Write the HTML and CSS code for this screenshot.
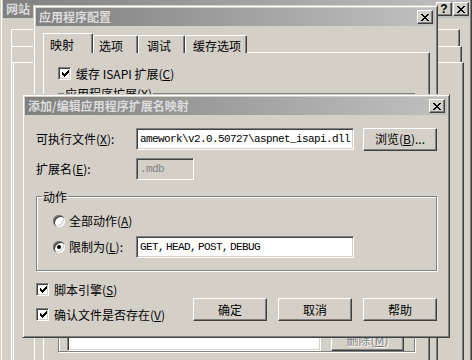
FILE: index.html
```html
<!DOCTYPE html>
<html lang="zh-CN">
<head>
  <meta charset="UTF-8">
  <title>添加/编辑应用程序扩展名映射</title>
  <link rel="stylesheet" href="styles.css">
</head>
<body>
  <div class="desktop">

    <!-- 网站 属性 (back window) -->
    <div class="window win-site">
      <div class="titlebar">
        <span class="title">网站</span>
        <span class="caption-btns">
          <span class="cap-btn cap-help">?</span>
          <span class="cap-btn">
            <svg width="8" height="7" viewBox="0 0 8 7"><path d="M0 0h2v1H0zM6 0h2v1H6zM1 1h2v1H1zM5 1h2v1H5zM2 2h4v1H2zM3 3h2v1H3zM2 4h4v1H2zM1 5h2v1H1zM5 5h2v1H5zM0 6h2v1H0zM6 6h2v1H6z"/></svg>
          </span>
        </span>
      </div>
      <div class="site-tabrow site-tabrow-1"></div>
      <div class="site-tabrow site-tabrow-2"></div>
      <div class="site-panel"></div>
    </div>

    <!-- 应用程序配置 (middle window) -->
    <div class="window win-config">
      <div class="titlebar">
        <span class="title">应用程序配置</span>
        <span class="caption-btns">
          <span class="cap-btn">
            <svg width="8" height="7" viewBox="0 0 8 7"><path d="M0 0h2v1H0zM6 0h2v1H6zM1 1h2v1H1zM5 1h2v1H5zM2 2h4v1H2zM3 3h2v1H3zM2 4h4v1H2zM1 5h2v1H1zM5 5h2v1H5zM0 6h2v1H0zM6 6h2v1H6z"/></svg>
          </span>
        </span>
      </div>
      <div class="tabs">
        <div class="tab active tab-map">映射</div>
        <div class="tab tab-opt">选项</div>
        <div class="tab tab-debug">调试</div>
        <div class="tab tab-cache">缓存选项</div>
      </div>
      <div class="tab-panel">
        <div class="check-row">
          <span class="checkbox checked">
            <svg width="9" height="9" viewBox="0 0 9 9"><path d="M1 2h1v3H1zM2 3h1v3H2zM3 4h1v3H3zM4 3h1v3H4zM5 2h1v3H5zM6 1h1v3H6zM7 0h1v3H7z"/></svg>
          </span>
          <span>缓存 ISAPI 扩展(<u>C</u>)</span>
        </div>
        <div class="group ext-group">
          <span class="legend">应用程序扩展(<u>X</u>)</span>
          <div class="ext-bottom">
            <div class="listbox"></div>
            <span class="btn btn-disabled">删除(<u>M</u>)</span>
          </div>
        </div>
      </div>
    </div>

    <!-- 添加/编辑应用程序扩展名映射 (front dialog) -->
    <div class="window dlg-map">
      <div class="titlebar">
        <span class="title">添加/编辑应用程序扩展名映射</span>
        <span class="caption-btns">
          <span class="cap-btn">
            <svg width="8" height="7" viewBox="0 0 8 7"><path d="M0 0h2v1H0zM6 0h2v1H6zM1 1h2v1H1zM5 1h2v1H5zM2 2h4v1H2zM3 3h2v1H3zM2 4h4v1H2zM1 5h2v1H1zM5 5h2v1H5zM0 6h2v1H0zM6 6h2v1H6z"/></svg>
          </span>
        </span>
      </div>

      <div class="dlg-body">
        <div class="field field-exe">
          <span class="field-label">可执行文件(<u>X</u>):</span>
          <span class="textbox textbox-exe">amework\v2.0.50727\aspnet_isapi.dll</span>
          <span class="btn btn-browse">浏览(<u>B</u>)...</span>
        </div>

        <div class="field field-ext">
          <span class="field-label">扩展名(<u>E</u>):</span>
          <span class="textbox textbox-ext disabled">.mdb</span>
        </div>

        <div class="group verbs-group">
          <span class="legend">动作</span>
          <div class="radio-row">
            <span class="radio"></span>
            <span class="radio-label">全部动作(<u>A</u>)</span>
          </div>
          <div class="radio-row">
            <span class="radio checked"></span>
            <span class="radio-label">限制为(<u>L</u>):</span>
            <span class="textbox textbox-verbs">GET, HEAD, POST, DEBUG</span>
          </div>
        </div>

        <div class="dlg-bottom">
          <div class="checks">
            <div class="check-row">
              <span class="checkbox checked">
                <svg width="9" height="9" viewBox="0 0 9 9"><path d="M1 2h1v3H1zM2 3h1v3H2zM3 4h1v3H3zM4 3h1v3H4zM5 2h1v3H5zM6 1h1v3H6zM7 0h1v3H7z"/></svg>
              </span>
              <span>脚本引擎(<u>S</u>)</span>
            </div>
            <div class="check-row">
              <span class="checkbox checked">
                <svg width="9" height="9" viewBox="0 0 9 9"><path d="M1 2h1v3H1zM2 3h1v3H2zM3 4h1v3H3zM4 3h1v3H4zM5 2h1v3H5zM6 1h1v3H6zM7 0h1v3H7z"/></svg>
              </span>
              <span>确认文件是否存在(<u>V</u>)</span>
            </div>
          </div>
          <div class="dlg-buttons">
            <span class="btn">确定</span>
            <span class="btn">取消</span>
            <span class="btn">帮助</span>
          </div>
        </div>
      </div>
    </div>

  </div>
</body>
</html>
```

FILE: styles.css
```css
:root {
  --face: #d4d0c8;
  --light: #ffffff;
  --shadow: #808080;
  --dark: #404040;
  --caption-left: #808080;
  --caption-right: #c0c0c0;
  --caption-text: #dcdcdc;
}

* {
  margin: 0;
  padding: 0;
  box-sizing: border-box;
}

body {
  width: 472px;
  height: 360px;
  overflow: hidden;
  background: var(--face);
  color: #000;
  font-family: "Noto Sans CJK SC", sans-serif;
  font-size: 12px;
  line-height: 1;
}

u {
  text-decoration: underline;
  text-underline-offset: 1px;
}

.desktop {
  position: relative;
  width: 472px;
  height: 360px;
  overflow: hidden;
}

/* ---------- window frame ---------- */

.window {
  position: absolute;
  display: flex;
  flex-direction: column;
  background: var(--face);
  border: 1px solid;
  border-color: var(--face) var(--dark) var(--dark) var(--face);
  box-shadow: inset 1px 1px var(--light), inset -1px -1px var(--shadow);
  padding: 2px;
}

.titlebar {
  flex: none;
  height: 18px;
  display: flex;
  align-items: center;
  justify-content: space-between;
  padding-left: 3px;
  background: linear-gradient(to right, var(--caption-left), var(--caption-right));
}

.title {
  color: var(--caption-text);
  font-weight: bold;
  font-size: 12px;
  line-height: 18px;
  white-space: nowrap;
}

.caption-btns {
  display: flex;
  align-items: center;
  gap: 0;
  margin-right: 2px;
}

.cap-btn {
  width: 16px;
  height: 14px;
  display: flex;
  align-items: center;
  justify-content: center;
  background: var(--face);
  border: 1px solid;
  border-color: var(--light) var(--dark) var(--dark) var(--light);
  box-shadow: inset -1px -1px var(--shadow);
}

.cap-btn svg {
  fill: #000;
  shape-rendering: crispEdges;
  margin-top: 1px;
}

.cap-help {
  margin-right: 1px;
  font-family: "Liberation Sans", sans-serif;
  font-weight: bold;
  font-size: 12px;
  line-height: 12px;
}

/* ---------- back window: 网站 ---------- */

.win-site {
  left: 0;
  top: -3px;
  width: 472px;
  height: 400px;
}

.win-site .caption-btns {
  margin-right: 0;
}

.site-tabrow {
  flex: none;
  margin-left: 8px;
  border-top: 1px solid var(--light);
  border-left: 1px solid var(--light);
  border-right: 1px solid var(--dark);
  box-shadow: inset -1px 0 var(--shadow);
}

.site-tabrow-1 {
  margin-top: 11px;
  height: 17px;
  margin-right: 9px;
}

.site-tabrow-2 {
  height: 16px;
  margin-right: 7px;
}

.site-panel {
  flex: 1;
  margin: 0 5px 0 8px;
  border-top: 1px solid var(--light);
  border-left: 1px solid var(--light);
  border-right: 1px solid var(--dark);
  box-shadow: inset -1px 0 var(--shadow), inset 1px 0 var(--face), inset 2px 0 var(--light);
}

/* ---------- middle window: 应用程序配置 ---------- */

.win-config {
  left: 33px;
  top: 5px;
  width: 405px;
  height: 400px;
}

.tabs {
  flex: none;
  display: flex;
  align-items: flex-end;
  height: 20px;
  margin-top: 7px;
  padding-left: 7px;
  position: relative;
  z-index: 1;
  margin-bottom: -1px;
}

.tab {
  height: 18px;
  padding: 4px 0 0 5px;
  border-top: 1px solid var(--light);
  border-left: 1px solid var(--light);
  border-right: 1px solid var(--dark);
  border-radius: 2px 2px 0 0;
  box-shadow: inset -1px 0 var(--shadow);
  background: var(--face);
  white-space: nowrap;
}

.tab.active {
  height: 20px;
  padding: 5px 0 0 6px;
}

.tab-map { width: 50px; }
.tab-opt { width: 45px; }
.tab-debug { width: 47px; padding-left: 8px; }
.tab-cache { width: 62px; padding-left: 7px; }

.tab-panel {
  flex: 1;
  margin: 0 5px 0 7px;
  padding: 14px 0 0 14px;
  border-top: 1px solid var(--light);
  border-left: 1px solid var(--light);
  border-right: 1px solid var(--dark);
  box-shadow: inset -1px 0 var(--shadow);
}

.ext-group {
  margin-top: 13px;
  width: 357px;
  padding: 57px 0 0 8px;
}

.ext-bottom {
  display: flex;
  align-items: flex-end;
  gap: 10px;
}

.listbox {
  width: 254px;
  height: 200px;
  background: #fff;
  border: 1px solid;
  border-color: var(--shadow) var(--light) var(--light) var(--shadow);
  box-shadow: inset 1px 1px var(--dark), inset -1px -1px var(--face);
}

/* ---------- common controls ---------- */

.group {
  position: relative;
  border: 1px solid var(--shadow);
  box-shadow: inset 1px 1px var(--light), 1px 1px var(--light);
}

.legend {
  position: absolute;
  left: 5px;
  top: -8px;
  padding: 0 1px;
  background: var(--face);
  line-height: 15px;
  white-space: nowrap;
}

.check-row {
  display: flex;
  align-items: center;
  gap: 5px;
  height: 13px;
  white-space: nowrap;
}

.checkbox {
  flex: none;
  width: 13px;
  height: 13px;
  padding: 2px;
  background: #fff;
  border: 1px solid;
  border-color: var(--shadow) var(--light) var(--light) var(--shadow);
  box-shadow: inset 1px 1px var(--dark), inset -1px -1px var(--face);
}

.checkbox svg {
  display: block;
  fill: #000;
  shape-rendering: crispEdges;
}

.radio {
  flex: none;
  position: relative;
  width: 12px;
  height: 12px;
  border-radius: 50%;
  background: #fff;
  box-shadow: inset 1px 1px var(--shadow), inset 2px 2px var(--dark), inset -1px -1px var(--light), inset -2px -2px var(--face);
}

.radio.checked::after {
  content: "";
  position: absolute;
  left: 4px;
  top: 4px;
  width: 4px;
  height: 4px;
  border-radius: 50%;
  background: #000;
}

.textbox {
  display: flex;
  align-items: center;
  height: 22px;
  padding: 0 3px;
  background: #fff;
  border: 1px solid;
  border-color: var(--shadow) var(--light) var(--light) var(--shadow);
  box-shadow: inset 1px 1px var(--dark), inset -1px -1px var(--face);
  font-family: "Liberation Mono", monospace;
  font-size: 11px;
  letter-spacing: -0.6px;
  white-space: pre;
  overflow: hidden;
}

.textbox.disabled {
  background: var(--face);
  color: var(--shadow);
}

.btn {
  flex: none;
  display: flex;
  align-items: center;
  justify-content: center;
  width: 74px;
  height: 23px;
  background: var(--face);
  border: 1px solid;
  border-color: var(--light) var(--dark) var(--dark) var(--light);
  box-shadow: inset -1px -1px var(--shadow);
  white-space: nowrap;
}

.btn-disabled {
  width: 73px;
  color: var(--shadow);
  text-shadow: 1px 1px var(--light);
}

/* ---------- front dialog ---------- */

.dlg-map {
  left: 22px;
  top: 94px;
  width: 428px;
  height: 244px;
}

.dlg-body {
  padding: 13px 0 0 11px;
}

.field {
  display: flex;
  align-items: center;
  height: 22px;
}

.field-label {
  width: 100px;
  white-space: nowrap;
}

.field-ext {
  margin-top: 8px;
}

.textbox-exe {
  width: 218px;
  margin-right: 9px;
}

.textbox-ext {
  width: 58px;
}

.verbs-group {
  margin-top: 16px;
  width: 401px;
  height: 75px;
  padding: 13px 0 0 16px;
}

.radio-row {
  display: flex;
  align-items: center;
  height: 22px;
}

.radio-row + .radio-row {
  margin-top: 4px;
}

.radio-label {
  width: 67px;
  margin-left: 4px;
  white-space: nowrap;
}

.textbox-verbs {
  width: 218px;
  word-spacing: -4px;
}

.dlg-bottom {
  display: flex;
  margin-top: 12px;
}

.checks {
  width: 157px;
  display: flex;
  flex-direction: column;
  gap: 12px;
}

.dlg-buttons {
  display: flex;
  gap: 11px;
  margin-top: 15px;
}
```
